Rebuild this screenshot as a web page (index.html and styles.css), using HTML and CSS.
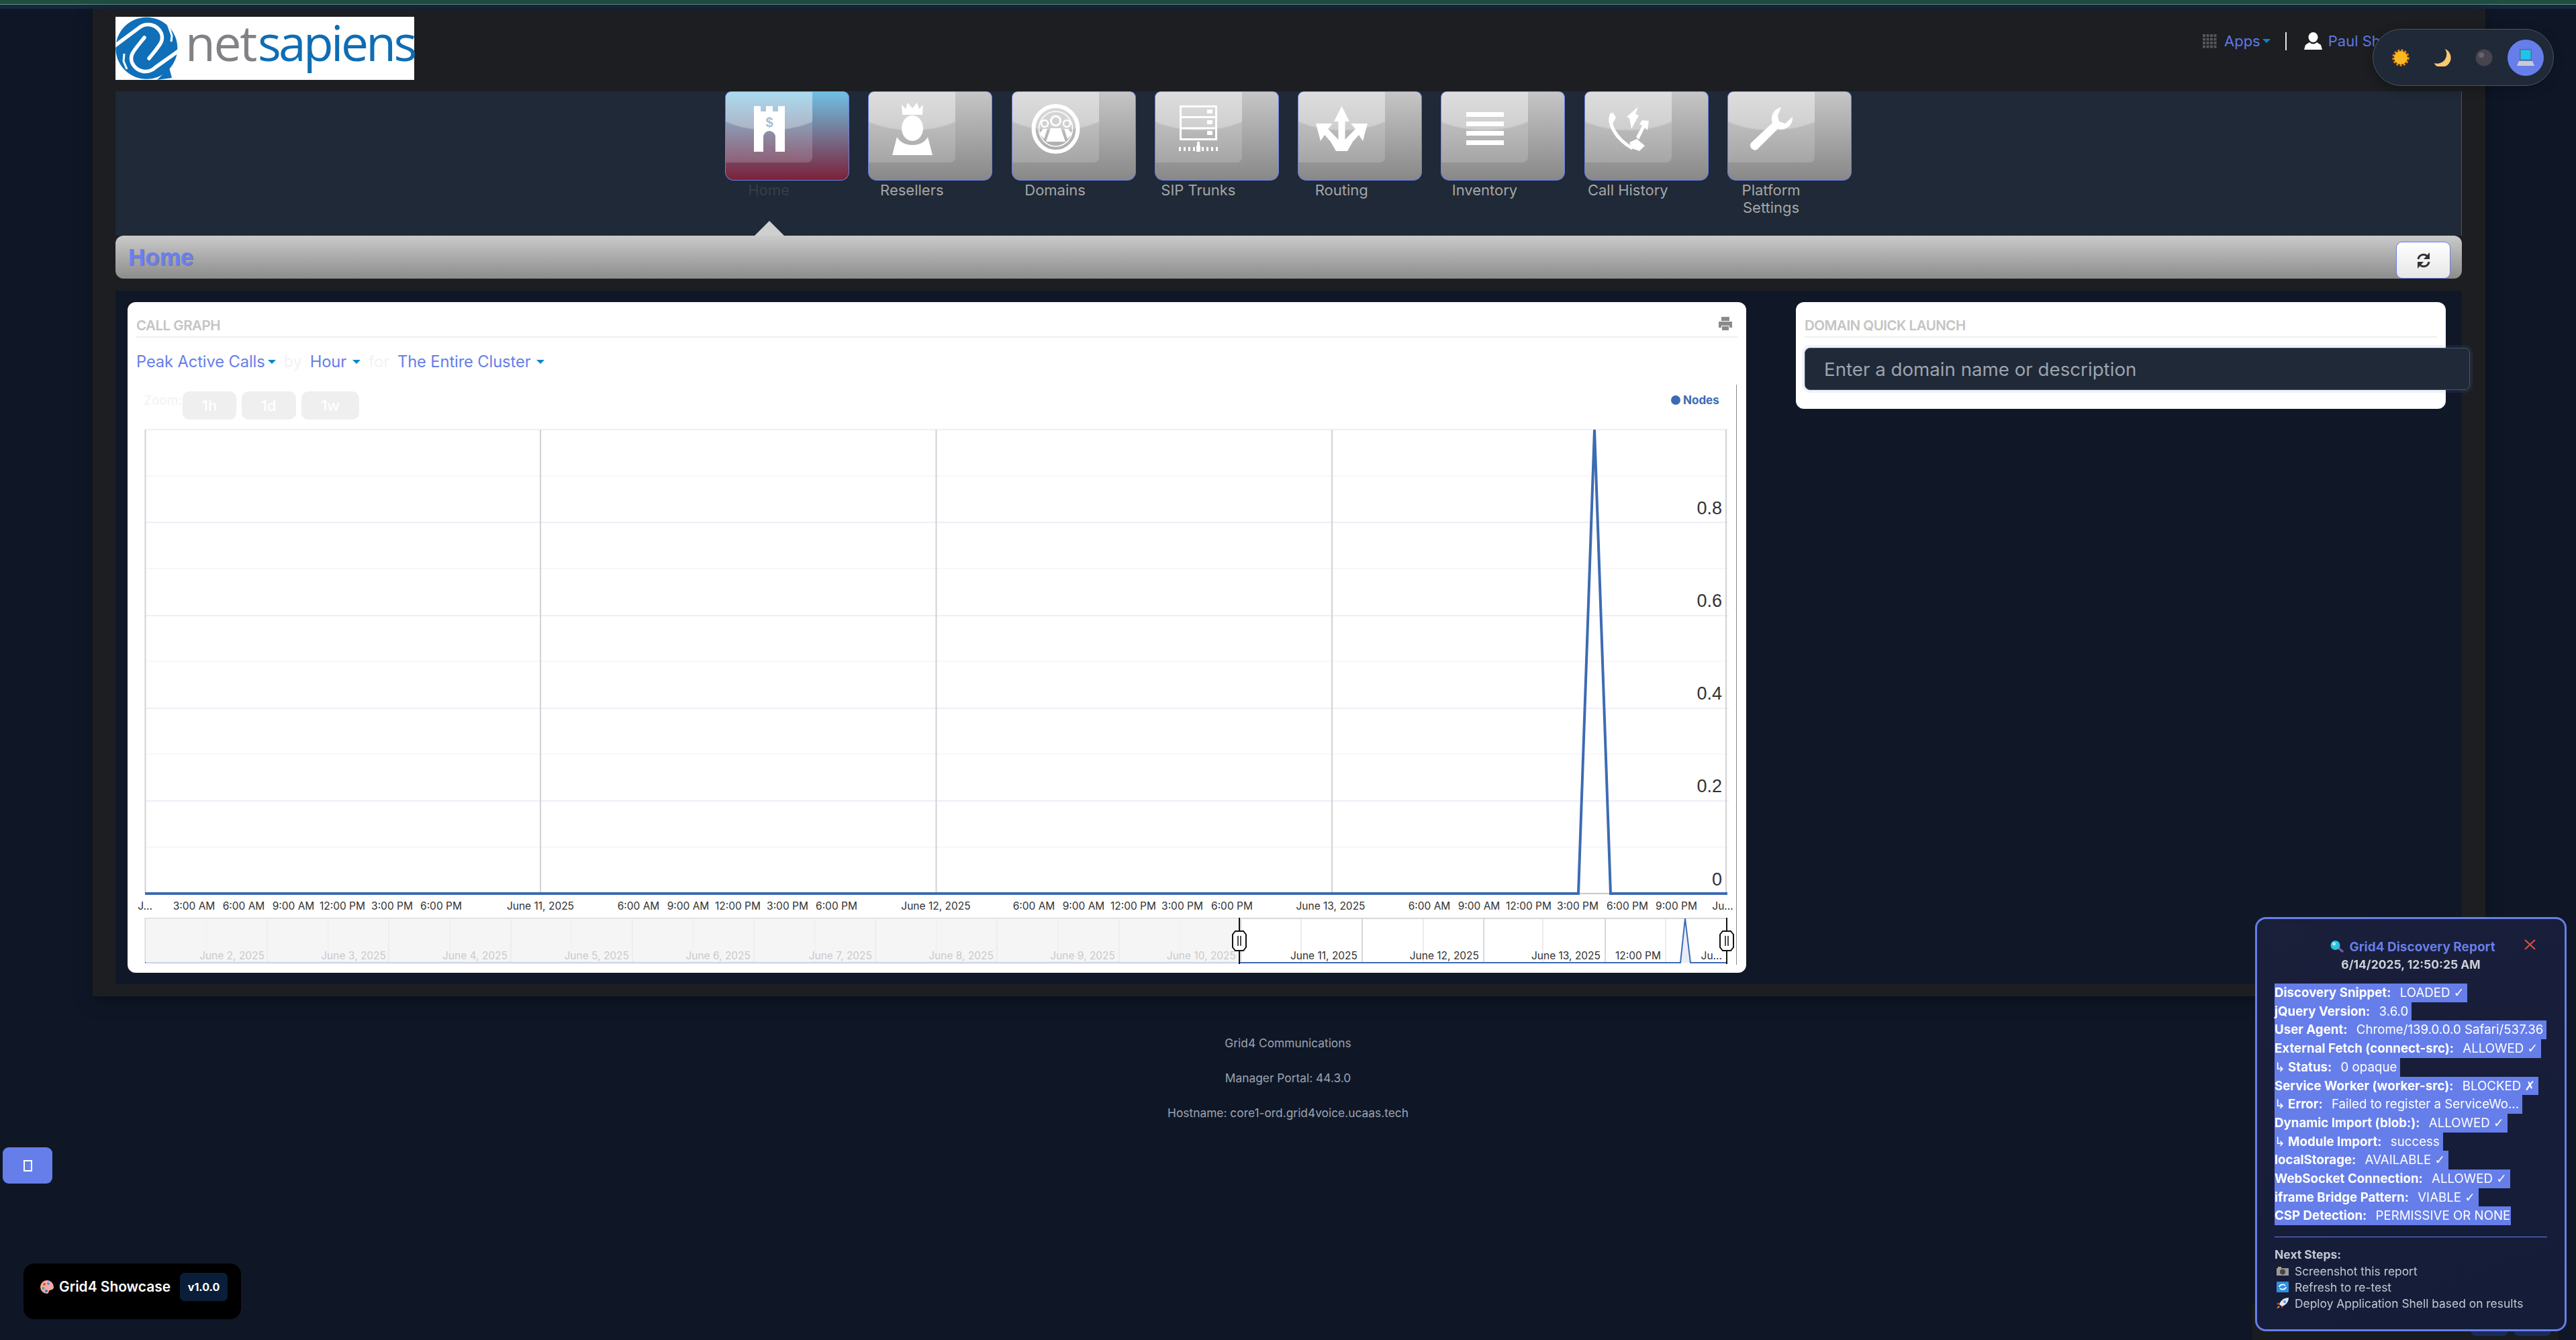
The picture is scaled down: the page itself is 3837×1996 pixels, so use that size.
FILE: index.html
```html
<!DOCTYPE html>
<html lang="en">
<head>
  <meta charset="UTF-8">
  <title>Manager Portal - Home</title>
  <link rel="stylesheet" href="styles.css">
</head>
<body>

<div class="top-strip"></div>
<div class="sub-strip"></div>

<div class="wrapper">
  <!-- header -->
  <div class="header">
    <div class="logo">
      <svg class="logo-mark" viewBox="0 0 93 94" width="93" height="94">
        <circle cx="46.3" cy="46.7" r="46" fill="#0f6fb8"/>
        <polygon points="80,76 84,91 62,94" fill="#0f6fb8"/>
        <path d="M-2 44 L33 18 C46 6 62 12 68 24 C73 36 66 42 50 62" fill="none" stroke="#fff" stroke-width="5.5" stroke-linecap="round"/>
        <path d="M95 50 L60 75 C47 87 31 81 25 69 C20 57 27 51 43 31" fill="none" stroke="#fff" stroke-width="5.5" stroke-linecap="round"/>
        <path d="M78 11 L84 28 L83 37" fill="none" stroke="#fff" stroke-width="3"/>
        <path d="M13 55 L12 66 L17 78" fill="none" stroke="#fff" stroke-width="3"/>
      </svg>
      <span class="logo-text"><span class="logo-net">net</span><span class="logo-sapiens">sapiens</span></span>
    </div>
    <div class="user-links">
      <svg class="apps-icon" viewBox="0 0 21 21" width="21" height="21">
        <path d="M0 0h4v4H0zM5.500 0h4v4h-4zM11 0h4v4h-4zM16.500 0h4v4h-4zM0 5.500h4v4H0zM5.500 5.500h4v4h-4zM11 5.500h4v4h-4zM16.500 5.500h4v4h-4zM0 11h4v4H0zM5.500 11h4v4h-4zM11 11h4v4h-4zM16.500 11h4v4h-4zM0 16.500h4v4H0zM5.500 16.500h4v4h-4zM11 16.500h4v4h-4zM16.500 16.500h4v4h-4z" fill="#55575a"/>
      </svg>
      <a class="top-link">Apps</a><span class="caret"></span>
      <span class="divider"></span>
      <svg class="user-icon" viewBox="0 0 27 26" width="27" height="26">
        <ellipse cx="13.5" cy="7.5" rx="7" ry="7.5" fill="#fff"/>
        <path d="M0 26 L2 19 L8 15 Q13.5 20 19 15 L25 19 L27 26Z" fill="#fff"/>
      </svg>
      <a class="top-link user-name">Paul Sh</a>
    </div>
  </div>

  <!-- nav tiles -->
  <div class="nav">
    <div class="nav-item active">
      <div class="tile"><div class="gloss">
        <svg viewBox="0 0 46 68" width="46" height="68">
          <path d="M0 0h10v8h8V0h10v8h8V0h10v68H32V46a9 9 0 0 0-18 0v22H0z" fill="#fff"/>
          <text class="castle-mark" x="23" y="31" text-anchor="middle">$</text>
        </svg>
      </div></div>
      <div class="nav-label">Home</div>
      <div class="nav-arrow"></div>
    </div>
    <div class="nav-item">
      <div class="tile"><div class="gloss">
        <svg viewBox="0 0 60 78" width="60" height="78">
          <path d="M15 18 L14 3 L20 9 L23 0 L30 8 L37 0 L40 9 L46 3 L45 18 Z" fill="#fff"/>
          <ellipse cx="30" cy="38" rx="16" ry="19" fill="#fff"/>
          <path d="M0 78 L7 51 Q14 63 30 63 Q46 63 53 51 L60 78Z" fill="#fff"/>
        </svg>
      </div></div>
      <div class="nav-label">Resellers</div>
    </div>
    <div class="nav-item">
      <div class="tile"><div class="gloss">
        <svg viewBox="0 0 73 74" width="73" height="74">
          <ellipse cx="36.5" cy="37" rx="33" ry="34" fill="none" stroke="#fff" stroke-width="6"/>
          <ellipse cx="36.5" cy="37" rx="25" ry="26" fill="none" stroke="#fff" stroke-width="1.5"/>
          <circle cx="36.5" cy="25" r="7" fill="none" stroke="#fff" stroke-width="3"/>
          <circle cx="20" cy="29" r="5" fill="none" stroke="#fff" stroke-width="2.5"/>
          <circle cx="53" cy="29" r="5" fill="none" stroke="#fff" stroke-width="2.5"/>
          <path d="M22 56 L29 36 H44 L51 56Z" fill="#fff"/>
          <path d="M12 44 L18 37 H24 L19 52Z M61 44 L55 37 H49 L54 52Z" fill="#fff"/>
        </svg>
      </div></div>
      <div class="nav-label">Domains</div>
    </div>
    <div class="nav-item">
      <div class="tile"><div class="gloss">
        <svg viewBox="0 0 58 69" width="58" height="69">
          <path d="M2.5 1.5h53v49h-53zM2.5 17.5h53M2.5 34h53" fill="none" stroke="#fff" stroke-width="3"/>
          <path d="M42 6h8v6h-8zM42 22h8v6h-8zM42 38h8v6h-8zM27 54h4v7h-4zM0 62h3v6H0zM7 62h3v6H7zM14 62h3v6h-3zM21 62h3v6h-3zM26 60h6v9h-6zM34 62h3v6h-3zM41 62h3v6h-3zM48 62h3v6h-3zM55 62h3v6h-3z" fill="#fff"/>
        </svg>
      </div></div>
      <div class="nav-label">SIP Trunks</div>
    </div>
    <div class="nav-item">
      <div class="tile"><div class="gloss">
        <svg viewBox="0 0 77 67" width="77" height="67">
          <path d="M38.5 0 L50 23 H43.5 V50 L59 34 L52 26 H77 L70 52 L64 43 L55 53 L47 67 H30 L22 53 L13 43 L7 52 L0 26 H25 L18 34 L33.5 50 V23 H27Z" fill="#fff"/>
        </svg>
      </div></div>
      <div class="nav-label">Routing</div>
    </div>
    <div class="nav-item">
      <div class="tile"><div class="gloss">
        <svg viewBox="0 0 56 49" width="56" height="49">
          <path d="M0 0h56v7H0zM0 14h56v7H0zM0 28h56v7H0zM0 42h56v7H0z" fill="#fff"/>
        </svg>
      </div></div>
      <div class="nav-label">Inventory</div>
    </div>
    <div class="nav-item">
      <div class="tile"><div class="gloss">
        <svg viewBox="0 0 62 66" width="62" height="66">
          <path d="M7 10 C0 24 12 48 38 62" fill="none" stroke="#fff" stroke-width="5"/>
          <path d="M8 8 L13 16 L7 27 L2 22Z M33 53 L44 48 L56 58 L48 66 L37 62Z" fill="#fff"/>
          <path d="M46 0 L42 11 L47 13 L36 33 L33 17 L29 15Z" fill="#fff"/>
          <path d="M52 20 L62 21 L60 35 L56 31 L47 49 L43 45 L52 28 L48 26Z" fill="#fff"/>
        </svg>
      </div></div>
      <div class="nav-label">Call History</div>
    </div>
    <div class="nav-item">
      <div class="tile"><div class="gloss">
        <svg viewBox="0 0 65 66" width="65" height="66">
          <path d="M47 1 A17 17 0 0 0 34 24 L2 54 Q-1 60 4 63 Q9 67 13 62 L42 33 A17 17 0 0 0 64 15 L53 25 L44 22 L42 13Z" fill="#fff"/>
        </svg>
      </div></div>
      <div class="nav-label">Platform Settings</div>
    </div>
  </div>

  <!-- page title bar -->
  <div class="title-bar">
    <h1>Home</h1>
    <button class="refresh-btn" type="button">
      <svg viewBox="0 0 22 24" width="22" height="24">
        <path d="M3 10 A8 8 0 0 1 16.5 5.5" fill="none" stroke="#333" stroke-width="3"/>
        <path d="M20 0 V10 H11Z" fill="#333"/>
        <path d="M19 14 A8 8 0 0 1 5.5 18.5" fill="none" stroke="#333" stroke-width="3"/>
        <path d="M2 24 V14 H11Z" fill="#333"/>
      </svg>
    </button>
  </div>

  <!-- panels -->
  <div class="content">
    <div class="card chart-card">
      <div class="card-head">
        <span>CALL GRAPH</span>
        <svg class="print-icon" viewBox="0 0 22 20" width="22" height="20">
          <path d="M5 0h12v6H5zM1 7h20v9h-4v-3H5v3H1zM6 14h10v6H6z" fill="#8a8a8a"/>
        </svg>
      </div>
      <div class="graph-opts">
        <a class="opt">Peak Active Calls</a><span class="caret opt-caret tight"></span>
        <span class="opt-word">by</span>
        <a class="opt">Hour</a><span class="caret opt-caret"></span>
        <span class="opt-word">for</span>
        <a class="opt">The Entire Cluster</a><span class="caret opt-caret"></span>
      </div>
      <svg class="graph" viewBox="190 570 2411 870" width="2411" height="870">
        <!-- zoom buttons -->
        <text class="zoom-label" x="214" y="603">Zoom:</text>
        <rect class="zoom-btn" x="272" y="583" width="80" height="42" rx="10"/>
        <rect class="zoom-btn" x="360" y="583" width="81" height="42" rx="10"/>
        <rect class="zoom-btn" x="449" y="583" width="86" height="42" rx="10"/>
        <text class="zoom-txt" x="312" y="612">1h</text>
        <text class="zoom-txt" x="400" y="612">1d</text>
        <text class="zoom-txt" x="492" y="612">1w</text>

        <!-- legend -->
        <circle cx="2496" cy="596" r="7" fill="#3d6bb3"/>
        <text class="legend" x="2507" y="602">Nodes</text>

        <!-- grid -->
        <path class="grid-minor" d="M216 709H2575M216 847H2575M216 985H2575M216 1123H2575M216 1262H2575"/>
        <path class="grid-major" d="M216 640H2575M216 778H2575M216 917H2575M216 1055H2575M216 1193H2575"/>
        <path class="grid-x" d="M216.5 640V1331M805 640V1331M1394.5 640V1331M1984 640V1331M2571 640V1331"/>

        <!-- y axis -->
        <g class="y-lbl">
          <text x="2565" y="766">0.8</text>
          <text x="2565" y="904">0.6</text>
          <text x="2565" y="1042">0.4</text>
          <text x="2565" y="1180">0.2</text>
          <text x="2565" y="1319">0</text>
        </g>

        <!-- series -->
        <path class="axis-line" d="M216 1331H2573"/>
        <path class="series" d="M216 1331H2351L2375 640L2399 1331H2573"/>

        <!-- x axis -->
        <g class="x-lbl">
          <text x="216" y="1355">J...</text>
          <text x="289" y="1355">3:00 AM</text>
          <text x="363" y="1355">6:00 AM</text>
          <text x="437" y="1355">9:00 AM</text>
          <text x="510" y="1355">12:00 PM</text>
          <text x="584" y="1355">3:00 PM</text>
          <text x="657" y="1355">6:00 PM</text>
          <text x="805" y="1355">June 11, 2025</text>
          <text x="951" y="1355">6:00 AM</text>
          <text x="1025" y="1355">9:00 AM</text>
          <text x="1099" y="1355">12:00 PM</text>
          <text x="1173" y="1355">3:00 PM</text>
          <text x="1246" y="1355">6:00 PM</text>
          <text x="1394" y="1355">June 12, 2025</text>
          <text x="1540" y="1355">6:00 AM</text>
          <text x="1614" y="1355">9:00 AM</text>
          <text x="1688" y="1355">12:00 PM</text>
          <text x="1761" y="1355">3:00 PM</text>
          <text x="1835" y="1355">6:00 PM</text>
          <text x="1982" y="1355">June 13, 2025</text>
          <text x="2129" y="1355">6:00 AM</text>
          <text x="2203" y="1355">9:00 AM</text>
          <text x="2277" y="1355">12:00 PM</text>
          <text x="2350" y="1355">3:00 PM</text>
          <text x="2424" y="1355">6:00 PM</text>
          <text x="2497" y="1355">9:00 PM</text>
          <text x="2566" y="1355">Ju...</text>
        </g>

        <!-- range navigator -->
        <path class="nav-minor" d="M307 1367V1434M489 1367V1434M670 1367V1434M851 1367V1434M1032 1367V1434M1214 1367V1434M1395 1367V1434M1576 1367V1434M1757 1367V1434M1938 1367V1434M2120 1367V1434M2298 1367V1434M2481 1367V1434"/>
        <path class="nav-major" d="M216.5 1367V1434M398 1367V1434M579 1367V1434M761 1367V1434M942 1367V1434M1123 1367V1434M1304 1367V1434M1485 1367V1434M1667 1367V1434M1848 1367V1434M2029 1367V1434M2210 1367V1434M2391 1367V1434"/>
        <path class="nav-top" d="M216 1368H2572"/>
        <path class="nav-fill" d="M2503 1434L2510 1368L2518 1434Z"/>
        <path class="nav-series" d="M216 1434H2503L2510 1368L2518 1434H2572"/>
        <g class="nav-lbl">
          <text x="394" y="1429">June 2, 2025</text>
          <text x="575" y="1429">June 3, 2025</text>
          <text x="756" y="1429">June 4, 2025</text>
          <text x="937" y="1429">June 5, 2025</text>
          <text x="1118" y="1429">June 6, 2025</text>
          <text x="1299" y="1429">June 7, 2025</text>
          <text x="1480" y="1429">June 8, 2025</text>
          <text x="1661" y="1429">June 9, 2025</text>
          <text x="1841" y="1429">June 10, 2025</text>
        </g>
        <rect class="nav-mask" x="217" y="1368" width="1629" height="68"/>
        <g class="nav-lbl active">
          <text x="2022" y="1429">June 11, 2025</text>
          <text x="2203" y="1429">June 12, 2025</text>
          <text x="2384" y="1429">June 13, 2025</text>
          <text x="2474" y="1429">12:00 PM</text>
          <text x="2565" y="1429">Ju...</text>
        </g>
        <path class="handle-line" d="M1846 1367V1436M2572 1367V1436"/>
        <path class="handle" d="M1840 1387h12l4 5v19l-4 5h-12l-4-5v-19z"/>
        <path class="handle" d="M2566 1387h12l4 5v19l-4 5h-12l-4-5v-19z"/>
        <path class="handle-bars" d="M1844 1394v15M1848 1394v15M2570 1394v15M2574 1394v15"/>

        <path class="edge-line" d="M2586.5 573V1437"/>
      </svg>
    </div>

    <div class="card launch-card">
      <div class="card-head"><span>DOMAIN QUICK LAUNCH</span></div>
      <input class="launch-input" type="text" placeholder="Enter a domain name or description">
    </div>
  </div>
</div>

<div class="footer">
  <p>Grid4 Communications</p>
  <p>Manager Portal: 44.3.0</p>
  <p>Hostname: core1-ord.grid4voice.ucaas.tech</p>
</div>

<!-- theme switcher -->
<div class="theme-pill">
  <span class="theme-opt">
    <svg viewBox="0 0 26 26" width="26" height="26">
      <circle cx="13" cy="13" r="11" fill="none" stroke="#e8820c" stroke-width="3.500" stroke-dasharray="3 2.200"/>
      <circle cx="13" cy="13" r="10" fill="#fbb81f"/>
    </svg>
  </span>
  <span class="theme-opt">
    <svg viewBox="0 0 26 26" width="26" height="26">
      <path d="M17 0 A13 13 0 0 1 6 26 Q2 25 1 21 A14 14 0 0 0 17 0Z" fill="#f8c874"/>
    </svg>
  </span>
  <span class="theme-opt">
    <svg viewBox="0 0 26 26" width="26" height="26">
      <circle cx="13" cy="13" r="12.5" fill="#47444f"/>
      <circle cx="9" cy="9" r="4" fill="#66636e"/>
    </svg>
  </span>
  <span class="theme-opt on">
    <svg viewBox="0 0 28 26" width="28" height="26">
      <rect x="5" y="0" width="18" height="17" fill="#5d6b78"/>
      <rect x="6.5" y="1.5" width="15" height="14" fill="#1ec4f0"/>
      <path d="M4 18h20l3 7H1z" fill="#c6ccd4"/>
    </svg>
  </span>
</div>

<!-- side buttons -->
<div class="side-btn"><span class="tofu"></span></div>

<div class="showcase">
  <svg viewBox="0 0 22 22" width="22" height="22">
    <path d="M11 1 A10 10 0 1 0 11 21 C14 21 13 17 15 16 C18 15 21 15 21 11 A10 10 0 0 0 11 1Z" fill="#f7a8a0"/>
    <circle cx="7" cy="7" r="2" fill="#e8483f"/>
    <circle cx="13" cy="6" r="2" fill="#3c9be8"/>
    <circle cx="5.500" cy="13" r="2" fill="#3fb56a"/>
    <circle cx="10" cy="17" r="2" fill="#2c7bd0"/>
  </svg>
  <span class="showcase-name">Grid4 Showcase</span>
  <span class="showcase-ver">v1.0.0</span>
</div>

<!-- element under the report -->
<div class="report-under">
  <span class="under-btn"></span>
  <span class="under-btn"></span>
</div>

<!-- discovery report -->
<div class="report">
  <div class="report-head">
    <svg viewBox="0 0 20 18" width="20" height="18">
      <path d="M12 11 L18 16" stroke="#8c4fa0" stroke-width="3.500" stroke-linecap="round"/>
      <circle cx="7.500" cy="7" r="7" fill="#29c3dc"/>
      <circle cx="5.500" cy="5" r="2.500" fill="#a8ecf6"/>
    </svg>
    <span>Grid4 Discovery Report</span>
  </div>
  <svg class="report-close" viewBox="0 0 17 16" width="17" height="16">
    <path d="M1 1 L16 15 M16 1 L1 15" stroke="#e74c3c" stroke-width="2"/>
  </svg>
  <div class="report-time">6/14/2025, 12:50:25 AM</div>

  <div class="report-rows">
    <div><span class="sel"><b>Discovery Snippet:</b> LOADED <i>✓</i></span></div>
    <div><span class="sel"><b>jQuery Version:</b> 3.6.0</span></div>
    <div><span class="sel"><b>User Agent:</b> Chrome/139.0.0.0 Safari/537.36</span></div>
    <div><span class="sel"><b>External Fetch (connect-src):</b> ALLOWED <i>✓</i></span></div>
    <div><span class="sel"><b><i>↳</i> Status:</b> 0 opaque</span></div>
    <div><span class="sel"><b>Service Worker (worker-src):</b> BLOCKED <i>✗</i></span></div>
    <div><span class="sel"><b><i>↳</i> Error:</b> Failed to register a ServiceWo...</span></div>
    <div><span class="sel"><b>Dynamic Import (blob:):</b> ALLOWED <i>✓</i></span></div>
    <div><span class="sel"><b><i>↳</i> Module Import:</b> success</span></div>
    <div><span class="sel"><b>localStorage:</b> AVAILABLE <i>✓</i></span></div>
    <div><span class="sel"><b>WebSocket Connection:</b> ALLOWED <i>✓</i></span></div>
    <div><span class="sel"><b>iframe Bridge Pattern:</b> VIABLE <i>✓</i></span></div>
    <div><span class="sel last"><b>CSP Detection:</b> PERMISSIVE OR NONE</span></div>
  </div>

  <div class="report-next">
    <div class="next-title">Next Steps:</div>
    <div class="next-row">
      <svg viewBox="0 0 18 14" width="18" height="14">
        <path d="M0 3h18v11H0z" fill="#9a9a9a"/><path d="M2 1h5v2H2z" fill="#e8a33a"/>
        <circle cx="9" cy="8.500" r="4" fill="#444"/>
      </svg>
      <span>Screenshot this report</span>
    </div>
    <div class="next-row">
      <svg viewBox="0 0 18 16" width="18" height="16">
        <rect width="18" height="16" rx="1" fill="#2f8fe0"/>
        <path d="M4 8a5 4 0 0 1 9-2M14 8a5 4 0 0 1-9 2" fill="none" stroke="#fff" stroke-width="1.800"/>
      </svg>
      <span>Refresh to re-test</span>
    </div>
    <div class="next-row">
      <svg viewBox="0 0 18 16" width="18" height="16">
        <path d="M18 0 C11 0 6 4 4 10 L8 13 C14 11 18 6 18 0Z" fill="#e3e6ec"/>
        <path d="M4 7 L0 9 L3 11Z M8 12 L7 16 L10 13Z" fill="#e8483f"/>
        <path d="M3 12 L0 16 L5 14Z" fill="#f6a623"/>
        <circle cx="12" cy="6" r="2" fill="#3c9be8"/>
      </svg>
      <span>Deploy Application Shell based on results</span>
    </div>
  </div>
</div>

</body>
</html>
```

FILE: styles.css
```css
html, body {
  margin: 0;
  padding: 0;
  height: 100%;
  overflow: hidden;
}

body {
  font-family: Inter, "Liberation Sans", sans-serif;
  background: #0f1727;
  min-height: 1996px;
}

.top-strip {
  height: 6px;
  background: #1f4d40;
  border-bottom: 1px solid #5c8f84;
}

.sub-strip {
  height: 6px;
  background: #18263d;
}

.wrapper {
  width: 3564px;
  margin-left: 138px;
  padding: 0 35px 18px 34px;
  box-sizing: border-box;
  background: #1c1e21;
  box-shadow: 0 8px 24px rgba(0,0,0,0.35);
}

/* header */
.header {
  display: flex;
  height: 123px;
  padding-top: 12px;
  box-sizing: border-box;
}

.logo {
  width: 445px;
  height: 94px;
  background: #fff;
  display: flex;
  align-items: flex-start;
}

.logo-mark {
  flex: none;
}

.logo-text {
  font-family: "Open Sans", sans-serif;
  font-size: 73px;
  line-height: 76px;
  margin-left: 11px;
  white-space: nowrap;
}

.logo-net {
  color: #808285;
  letter-spacing: -2.3px;
}

.logo-sapiens {
  color: #0f6db3;
  letter-spacing: -3.6px;
  margin-left: 3px;
}

.user-links {
  margin-left: auto;
  width: 386px;
  height: 50px;
  margin-top: 11px;
  display: flex;
  align-items: center;
  overflow: hidden;
  font-size: 22px;
}

.apps-icon {
  margin-right: 11px;
}

.top-link {
  color: #5f77e8;
}

.user-name {
  white-space: nowrap;
}

.caret {
  display: inline-block;
  width: 0;
  height: 0;
  border-left: 6px solid transparent;
  border-right: 6px solid transparent;
  border-top: 6px solid #0088cc;
  margin-left: 3px;
}

.divider {
  width: 2px;
  height: 27px;
  background: #e6e6e6;
  margin: 0 26px 0 22px;
}

.user-icon {
  margin-right: 9px;
}

/* nav */
.nav {
  display: flex;
  gap: 28.3px;
  height: 215px;
  padding-left: 908px;
  box-sizing: border-box;
  background: #1f2937;
  border-right: 1px solid #4d5563;
}

.nav-item {
  width: 185px;
  position: relative;
}

.tile {
  height: 133px;
  box-sizing: border-box;
  border: 1px solid #6a7fe6;
  border-top-color: #7f90ea;
  border-radius: 9px 9px 13px 13px;
  background: linear-gradient(#c6c6c6, #888);
  overflow: hidden;
}

.gloss {
  width: 129px;
  height: 105px;
  display: flex;
  align-items: center;
  justify-content: center;
  border-radius: 0 0 8px 0;
  background:
    radial-gradient(ellipse 105px 58px at 50% 0, rgba(255,255,255,0.3) 96%, rgba(255,255,255,0) 100%),
    rgba(255,255,255,0.17);
  padding-top: 4px;
  box-sizing: border-box;
}

.active .tile {
  background: linear-gradient(#6fc1e4, #7c2139);
}

.nav-label {
  width: 130px;
  margin-top: 1px;
  text-align: center;
  font-size: 22px;
  line-height: 26px;
  color: #a6a6a6;
}

.active .nav-label {
  color: #393d44;
}

.nav-arrow {
  position: absolute;
  left: 44px;
  top: 193px;
  width: 0;
  height: 0;
  border-left: 22px solid transparent;
  border-right: 22px solid transparent;
  border-bottom: 22px solid #cfcfcf;
}

.castle-mark {
  font-family: "Liberation Sans", sans-serif;
  font-size: 20px;
  font-weight: bold;
  fill: #a6bcd8;
}

/* title bar */
.title-bar {
  height: 64px;
  display: flex;
  justify-content: space-between;
  padding: 0 17px 0 19px;
  background: linear-gradient(#cacaca, #8c8c8c);
  border-radius: 12px;
}

h1 {
  margin: 0;
  font-family: "Liberation Sans", sans-serif;
  font-size: 35px;
  line-height: 64px;
  font-weight: bold;
  color: #6b7ff0;
  text-shadow: 1px 1px 0 #7a7a7a;
}

.refresh-btn {
  width: 81px;
  height: 55px;
  margin-top: 9px;
  padding: 0;
  border: 1px solid #6a7fe6;
  border-radius: 9px;
  background: linear-gradient(#fff, #e6e6e6);
  display: flex;
  align-items: center;
  justify-content: center;
}

/* panels */
.content {
  display: flex;
  align-items: flex-start;
  gap: 74px;
  margin-top: 18px;
  padding: 17px 0 17px 18px;
  background: #101828;
}

.card {
  background: #fff;
  border-radius: 12px;
  padding: 0 13px;
  box-sizing: border-box;
}

.chart-card {
  width: 2411px;
  height: 999px;
}

.launch-card {
  width: 968px;
  height: 159px;
}

.card-head {
  height: 53px;
  display: flex;
  justify-content: space-between;
  align-items: center;
  padding-top: 17px;
  box-sizing: border-box;
  border-bottom: 2px solid #eeeeee;
  font-size: 20.5px;
  font-weight: 600;
  letter-spacing: -0.5px;
  color: #c4c4c4;
}

.print-icon {
  margin-right: 7px;
  margin-top: -5px;
}

.graph-opts {
  height: 67px;
  padding-top: 4px;
  box-sizing: border-box;
  display: flex;
  align-items: center;
  font-size: 23.7px;
  letter-spacing: -0.1px;
}

.opt {
  color: #667eea;
}

.opt-caret {
  margin-left: 9px;
}

.opt-caret.tight {
  margin-left: 4px;
}

.opt-word {
  margin: 0 12px;
  color: #f2f2f6;
}

.graph {
  display: block;
  margin: 0 -13px;
}

.zoom-label {
  font-size: 19px;
  fill: #f2f2f4;
}

.zoom-btn {
  fill: #efefef;
}

.zoom-txt {
  font-size: 22px;
  font-weight: 500;
  fill: #fff;
  text-anchor: middle;
}

.legend {
  font-size: 17px;
  font-weight: bold;
  fill: #3d6bb3;
}

.grid-major {
  fill: none;
  stroke: #eeeef8;
  stroke-width: 2;
}

.grid-minor {
  fill: none;
  stroke: #f5f5f9;
  stroke-width: 1.5;
}

.grid-x {
  fill: none;
  stroke: #d2d2d4;
  stroke-width: 2;
}

.y-lbl text {
  font-family: "Liberation Sans", sans-serif;
  font-size: 27px;
  fill: #333;
  text-anchor: end;
}

.axis-line {
  fill: none;
  stroke: #c8c8c8;
  stroke-width: 2;
}

.series {
  fill: none;
  stroke: #3d6bb3;
  stroke-width: 4;
}

.x-lbl text {
  font-size: 15.5px;
  fill: #333;
  text-anchor: middle;
}

.nav-major {
  fill: none;
  stroke: #d8d8d8;
  stroke-width: 2;
}

.nav-minor {
  fill: none;
  stroke: #ececec;
  stroke-width: 2;
}

.nav-top {
  fill: none;
  stroke: #d8d8d8;
  stroke-width: 2;
}

.nav-fill {
  fill: #e8edf7;
}

.nav-series {
  fill: none;
  stroke: #3d6bb3;
  stroke-width: 2;
}

.nav-lbl text {
  font-size: 15.5px;
  fill: #333;
  text-anchor: end;
}

.nav-mask {
  fill: rgba(242,242,243,0.78);
}

.handle-line {
  fill: none;
  stroke: #111;
  stroke-width: 2;
}

.handle {
  fill: #fff;
  stroke: #111;
  stroke-width: 2;
}

.handle-bars {
  fill: none;
  stroke: #111;
  stroke-width: 1.5;
}

.edge-line {
  fill: none;
  stroke: #8a8a8a;
  stroke-width: 1;
}

.launch-input {
  display: block;
  width: 991px;
  height: 63px;
  margin-top: 15px;
  padding: 0 28px;
  box-sizing: border-box;
  background: #1f2937;
  border: 1px solid #4b5563;
  border-radius: 8px;
  box-shadow: 0 0 0 4px rgba(102,126,234,0.1);
  font-family: Inter, sans-serif;
  font-size: 27.7px;
  color: #e5e7eb;
}

.launch-input::placeholder {
  color: #9ca3af;
  opacity: 1;
}

/* footer */
.footer {
  padding-top: 44px;
  text-align: center;
  font-size: 17.35px;
  color: #9ca3af;
}

.footer p {
  margin: 0;
  line-height: 52px;
}

/* theme switcher */
.theme-pill {
  position: fixed;
  left: 3534px;
  top: 43px;
  width: 270px;
  height: 85px;
  box-sizing: border-box;
  display: flex;
  align-items: center;
  justify-content: space-between;
  padding: 0 14px 0 14px;
  background: #1f2937;
  border: 1px solid #4b5563;
  border-radius: 43px;
  box-shadow: 0 4px 16px rgba(0,0,0,0.3);
}

.theme-opt {
  width: 54px;
  height: 54px;
  display: flex;
  align-items: center;
  justify-content: center;
  border-radius: 50%;
}

.theme-opt.on {
  background: #667eea;
}

/* side buttons */
.side-btn {
  position: fixed;
  left: 4px;
  top: 1709px;
  width: 74px;
  height: 54px;
  display: flex;
  align-items: center;
  justify-content: center;
  background: #667eea;
  border-radius: 9px;
}

.tofu {
  width: 9px;
  height: 13px;
  border: 2px solid #fff;
}

.showcase {
  position: fixed;
  left: 35px;
  top: 1882px;
  width: 324px;
  height: 83px;
  box-sizing: border-box;
  padding: 14px 20px 0 24px;
  display: flex;
  align-items: flex-start;
  gap: 7px;
  background: #000;
  border-radius: 16px;
}

.showcase svg {
  margin-top: 10px;
}

.showcase-name {
  font-size: 20.9px;
  font-weight: 600;
  line-height: 42px;
  color: #fff;
  white-space: nowrap;
}

.showcase-ver {
  margin-left: auto;
  width: 71px;
  height: 42px;
  text-align: center;
  line-height: 42px;
  font-size: 16px;
  font-weight: 700;
  color: #fff;
  background: #0a1e3a;
  border-radius: 7px;
}

/* report */
.report-under {
  position: fixed;
  left: 3355px;
  top: 1941px;
  width: 456px;
  height: 55px;
  background: #191c1f;
  display: flex;
  justify-content: flex-end;
  gap: 8px;
  padding-right: 11px;
  box-sizing: border-box;
}

.under-btn {
  width: 56px;
  height: 49px;
  background: #1b2a5a;
  border-radius: 8px;
}

.report {
  position: fixed;
  left: 3359px;
  top: 1366px;
  width: 464px;
  height: 617px;
  box-sizing: border-box;
  padding: 29px 26px 0 26px;
  background: linear-gradient(160deg, #1a1f3a, #141c38);
  border: 3px solid #667eea;
  border-radius: 16px;
  color: #fff;
  font-size: 18.7px;
}

.report-head {
  display: flex;
  align-items: center;
  justify-content: center;
  gap: 8px;
  height: 24px;
  font-size: 19px;
  font-weight: 700;
  color: #667eea;
  padding-left: 6px;
}

.report-close {
  position: absolute;
  left: 398px;
  top: 30px;
}

.report-time {
  text-align: center;
  font-size: 17.5px;
  font-weight: 700;
  line-height: 24px;
  margin-top: 3px;
  color: #ccd0d8;
}

.report-rows {
  margin-top: 16px;
  line-height: 27.7px;
  white-space: nowrap;
}

.sel {
  display: inline-block;
  background: #667eea;
  padding-right: 5px;
}

.sel.last {
  padding-right: 1px;
}

.sel b {
  margin-right: 8px;
}

.sel i {
  font-family: "DejaVu Sans", sans-serif;
  font-style: normal;
  font-weight: normal;
}

.report-next {
  margin-top: 17px;
  padding-top: 14px;
  border-top: 1px solid #667eea;
  color: #c3c8d2;
}

.next-title {
  font-weight: 700;
  font-size: 17.5px;
  line-height: 24px;
}

.next-row {
  display: flex;
  align-items: center;
  gap: 9px;
  height: 24px;
  padding-left: 3px;
  font-size: 17.4px;
}
```
